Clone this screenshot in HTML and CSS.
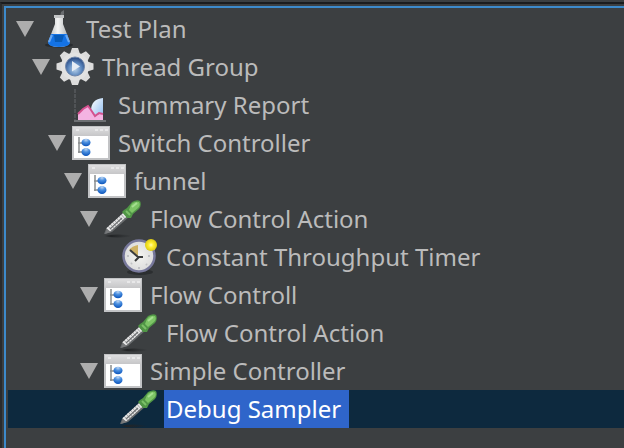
FILE: index.html
```html
<!DOCTYPE html>
<html lang="en">
<head>
<meta charset="utf-8">
<title>Test Plan</title>
<link rel="stylesheet" href="styles.css">
</head>
<body>
<svg class="defs" aria-hidden="true">
  <defs>
    <linearGradient id="glass" x1="0" x2="1" y1="0" y2="0">
      <stop offset="0" stop-color="#b0b3b5"/><stop offset=".45" stop-color="#f4f5f5"/><stop offset="1" stop-color="#a4a7a9"/>
    </linearGradient>
    <linearGradient id="bar" x1="0" x2="0" y1="0" y2="1">
      <stop offset="0" stop-color="#dededf"/><stop offset="1" stop-color="#c6c6c8"/>
    </linearGradient>
    <radialGradient id="orb" cx=".5" cy=".15" r=".8">
      <stop offset="0" stop-color="#c0d6f0"/><stop offset=".45" stop-color="#4a8fe0"/><stop offset="1" stop-color="#1058bd"/>
    </radialGradient>
    <radialGradient id="core" cx=".5" cy=".65" r=".6">
      <stop offset="0" stop-color="#b9d2ea"/><stop offset=".6" stop-color="#5b86bd"/><stop offset="1" stop-color="#2c4d85"/>
    </radialGradient>
    <linearGradient id="drop" x1="0" x2="1" y1="0" y2="1">
      <stop offset="0" stop-color="#ffffff"/><stop offset="1" stop-color="#8dbcf0"/>
    </linearGradient>
    <radialGradient id="face" cx=".5" cy=".5" r=".5">
      <stop offset="0" stop-color="#f4f4f1"/><stop offset="1" stop-color="#dcdcdc"/>
    </radialGradient>
    <radialGradient id="glow" cx=".5" cy=".5" r=".5">
      <stop offset="0" stop-color="#fffbb0"/><stop offset=".4" stop-color="#ffee32"/><stop offset="1" stop-color="#dcca12"/>
    </radialGradient>
    <linearGradient id="shade" x1="0" x2="1" y1="0" y2="0">
      <stop offset="0" stop-color="#222426" stop-opacity="0"/><stop offset=".25" stop-color="#222426"/><stop offset="1" stop-color="#222426" stop-opacity="0"/>
    </linearGradient>
    <symbol id="window" viewBox="0 0 38 38">
      <rect x="0" y="2" width="38" height="34" fill="#c2c3c5"/>
      <rect x="2" y="12" width="34" height="22" fill="#fff"/>
      <rect x="1" y="3" width="36" height="9" fill="url(#bar)"/>
      <path d="M4 5h3v2H4zM23 5h3v2h-3zM28 5h3v2h-3zM33 5h3v2h-3z" fill="#e8e8e9"/>
      <path d="M7 13v16M6 19h5M6 28h5" fill="none" stroke="#8b8e90" stroke-width="1.5"/>
      <ellipse cx="14" cy="18.500" rx="4.500" ry="3.800" fill="url(#orb)"/>
      <ellipse cx="14" cy="28" rx="4.500" ry="4" fill="url(#orb)"/>
    </symbol>
    <symbol id="dropper" viewBox="0 0 38 38">
      <ellipse cx="14" cy="36" rx="14" ry="1.5" fill="url(#shade)"/>
      <path d="M0 34l2-5 19-18 5 5L8 32z" fill="#686b6d"/>
      <path d="M4 30L23 13" stroke="#e6e6e6" stroke-width="5" stroke-dasharray="2.5 .4"/>
      <path d="M6 29L18 18" stroke="#707375" stroke-width="1.2"/>
      <path d="M1 34l2-5 4 3z" fill="#77797b"/>
      <path d="M20 10l3-2 5-6q5-3 8-1 2 4-1 8l-6 5-2 4-4 0-5-6z" fill="#509546"/>
      <path d="M27 5q3-4 8-3 2 3-1 6l-6 5-3-3z" fill="#7dc566"/>
      <path d="M22 11l4 4" stroke="#7cc068" stroke-width="2"/>
      <path d="M28 7l5-4" stroke="#a5df90" stroke-width="2"/>
    </symbol>
  </defs>
</svg>
<main class="pane">
  <ul class="tree" role="tree" aria-label="Test plan elements">
    <li class="row depth-0" role="treeitem" aria-level="1" aria-expanded="true">
      <button class="toggle" aria-label="Collapse Test Plan"></button>
      <svg class="icon" viewBox="0 0 38 38" aria-hidden="true">
        <ellipse cx="19" cy="35" rx="14" ry="2.5" fill="#292c2f"/>
        <path d="M20 7l1-5 3-2v4l-2 4z" fill="#6a6d70"/>
        <path d="M15 5h8v9l7 18q-1 5-11 5T8 32l7-18z" fill="url(#glass)"/>
        <path d="M11 24h16l3 9q-1 4-11 4T8 33z" fill="#1473e6"/>
        <path d="M14 25h10l-2 7h-7z" fill="#075bb8"/>
        <path d="M12 25l-3 7M26 25l3 7" stroke="#6aa9f2" stroke-width="2"/>
        <path d="M14 5h10v3H14z" fill="#c3c5c6"/>
      </svg>
      <span class="label">Test Plan</span>
    </li>
    <li class="row depth-1" role="treeitem" aria-level="2" aria-expanded="true">
      <button class="toggle" aria-label="Collapse Thread Group"></button>
      <svg class="icon" viewBox="0 0 38 38" aria-hidden="true">
        <g fill="#dcdcdc">
          <path d="M16 0h6l2 6v25l-2 6h-6l-2-6V6z"/>
          <path d="M16 0h6l2 6v25l-2 6h-6l-2-6V6z" transform="rotate(45 19 18.5)"/>
          <path d="M16 0h6l2 6v25l-2 6h-6l-2-6V6z" transform="rotate(90 19 18.5)"/>
          <path d="M16 0h6l2 6v25l-2 6h-6l-2-6V6z" transform="rotate(135 19 18.5)"/>
        </g>
        <circle cx="19" cy="18.500" r="14" fill="#e2e2e2"/>
        <circle cx="19" cy="18.500" r="9.500" fill="url(#core)" stroke="#6f86aa" stroke-width="1"/>
        <path d="M16 13l8 5.500-8 5z" fill="#e6edf5"/>
      </svg>
      <span class="label">Thread Group</span>
    </li>
    <li class="row depth-2 leaf" role="treeitem" aria-level="3">
      <svg class="icon" viewBox="0 0 38 38" aria-hidden="true">
        <path d="M3 3v32" stroke="#505356" stroke-width="2" stroke-dasharray="4 1"/>
        <path d="M2 35h32" stroke="#6c6f72" stroke-width="2"/>
        <path d="M6 28l5-5 5-3 3 4 4 6 8-4v8H6z" fill="#f4b3e2"/>
        <path d="M31 12v16l-4-1-4 4-4-6q0-12 12-13z" fill="url(#drop)"/>
        <path d="M6 28l5-5 5-3 3 4 4 6 4-3 4 1" fill="none" stroke="#d4518f" stroke-width="2"/>
      </svg>
      <span class="label">Summary Report</span>
    </li>
    <li class="row depth-2" role="treeitem" aria-level="3" aria-expanded="true">
      <button class="toggle" aria-label="Collapse Switch Controller"></button>
      <svg class="icon" aria-hidden="true"><use href="#window"/></svg>
      <span class="label">Switch Controller</span>
    </li>
    <li class="row depth-3" role="treeitem" aria-level="4" aria-expanded="true">
      <button class="toggle" aria-label="Collapse funnel"></button>
      <svg class="icon" aria-hidden="true"><use href="#window"/></svg>
      <span class="label">funnel</span>
    </li>
    <li class="row depth-4" role="treeitem" aria-level="5" aria-expanded="true">
      <button class="toggle" aria-label="Collapse Flow Control Action"></button>
      <svg class="icon" aria-hidden="true"><use href="#dropper"/></svg>
      <span class="label">Flow Control Action</span>
    </li>
    <li class="row depth-5 leaf" role="treeitem" aria-level="6">
      <svg class="icon" viewBox="0 0 38 38" aria-hidden="true">
        <ellipse cx="20" cy="34" rx="13" ry="3" fill="#2b2e30"/>
        <circle cx="19" cy="18" r="15.500" fill="url(#face)" stroke="#77789b" stroke-width="2.500"/>
        <path d="M9 12q3-4 9-5v11z" fill="#cfb264"/>
        <path d="M10 12l8 7M15 23l4-4h4" fill="none" stroke="#3a3c3d" stroke-width="2"/>
        <path d="M7 18h2M18 30h2M28 18h2M26 26l1 1M11 26l1-1" stroke="#c0c1c4" stroke-width="2"/>
        <circle cx="31" cy="7" r="6" fill="url(#glow)"/>
      </svg>
      <span class="label">Constant Throughput Timer</span>
    </li>
    <li class="row depth-4" role="treeitem" aria-level="5" aria-expanded="true">
      <button class="toggle" aria-label="Collapse Flow Controll"></button>
      <svg class="icon" aria-hidden="true"><use href="#window"/></svg>
      <span class="label">Flow Controll</span>
    </li>
    <li class="row depth-5 leaf" role="treeitem" aria-level="6">
      <svg class="icon" aria-hidden="true"><use href="#dropper"/></svg>
      <span class="label">Flow Control Action</span>
    </li>
    <li class="row depth-4" role="treeitem" aria-level="5" aria-expanded="true">
      <button class="toggle" aria-label="Collapse Simple Controller"></button>
      <svg class="icon" aria-hidden="true"><use href="#window"/></svg>
      <span class="label">Simple Controller</span>
    </li>
    <li class="row depth-5 leaf selected" role="treeitem" aria-level="6" aria-selected="true">
      <svg class="icon" aria-hidden="true"><use href="#dropper"/></svg>
      <span class="label">Debug Sampler</span>
    </li>
  </ul>
</main>
</body>
</html>
```
FILE: styles.css
```css
* {
  box-sizing: border-box;
}

body {
  display: flex;
  min-height: 100vh;
  margin: 0;
  padding-top: 2px;
  background: #3c3f41;
  color: #bbbbbb;
  font: 24px/38px "Noto Sans", "Open Sans", sans-serif;
}

.defs {
  position: absolute;
  width: 0;
  height: 0;
}

.pane {
  display: flex;
  flex: 1;
  padding: 2px 0 0 2px;
  border-top: 2px solid #1b1c1e;
  border-left: 2px solid #292b2d;
}

.tree {
  flex: 1;
  margin: 0;
  padding: 2px 0 0 2px;
  border-top: 2px solid #3d8acb;
  border-left: 2px solid #3d8acb;
  list-style: none;
}

.row {
  display: flex;
  align-items: center;
  gap: 6px;
  height: 38px;
  white-space: nowrap;
}

.depth-0 { padding-left: 8px; }
.depth-1 { padding-left: 24px; }
.depth-2 { padding-left: 40px; }
.depth-3 { padding-left: 56px; }
.depth-4 { padding-left: 72px; }
.depth-5 { padding-left: 88px; }

.leaf::before {
  content: "";
  width: 18px;
}

.toggle {
  width: 18px;
  height: 16px;
  padding: 0;
  border: 0;
  background: #adadad;
  clip-path: polygon(0 0, 100% 0, 50% 100%);
}

.icon {
  flex: none;
  width: 38px;
  height: 38px;
}

.label {
  padding: 0 8px 0 2px;
}

.selected {
  background: #0d293e;
}

.selected .label {
  background: #2f65ca;
  color: #ffffff;
}
```
